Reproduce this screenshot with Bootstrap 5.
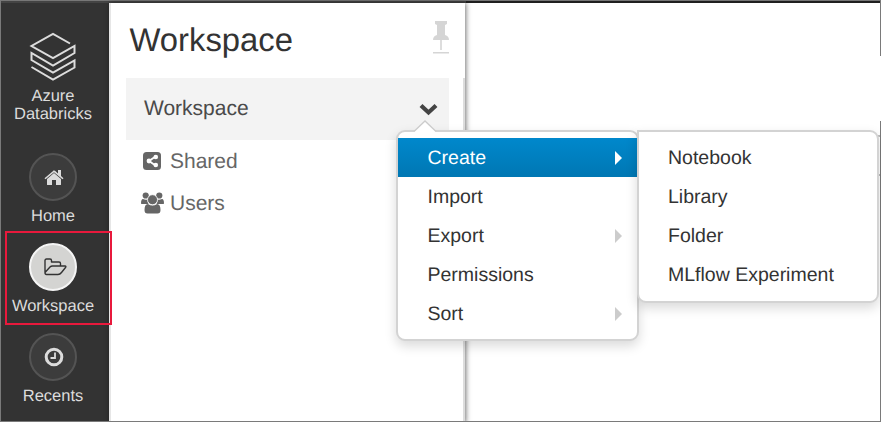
<!DOCTYPE html>
<html lang="en">
<head>
<meta charset="utf-8">
<title>Azure Databricks Workspace</title>
<link href="https://cdn.jsdelivr.net/npm/bootstrap@5.3.0/dist/css/bootstrap.min.css" rel="stylesheet">
<style>
body{font-family:"Liberation Sans",Arial,sans-serif;background:#fff;color:#333;text-rendering:geometricPrecision}
.app{width:881px;height:422px;border-left:1px solid #7a7a7a;border-bottom:1px solid #7a7a7a}
.topline{height:3px;border-top:1px solid #777;background:#1f1f1f}
.topline div{width:465px;height:2px;background:#444}
.sidebar{width:108px;padding-right:4px;background:#333;color:#dcdcdc;font-size:16.5px;line-height:18px}
.brand{padding-top:29px;height:150px}
.brand svg{margin-bottom:5px}
.side-item{height:90px;color:#dcdcdc;text-decoration:none}
.round{width:48px;height:48px;padding-left:2px;border:2px solid #545454;background:#3c3c3c;margin-bottom:6px}
.selected .round{padding-left:4px;background:#d4d4d2;border-color:#f5f5f5}
.highlight{left:4px;top:231px;width:107px;height:94px;border:2px solid #e8193c;z-index:3}
.panel{width:356px;border-left:2px solid #e6e6e6;box-shadow:1px 0 5px rgba(0,0,0,.55);background:#fff}
.panel-head{height:75px;padding:17px 15px 0 18.5px}
.panel-head h1{font-size:32.8px;line-height:40px;font-weight:400;color:#333}
.panel-head svg{margin-top:1px}
.tree{border-right:2px solid #ddd;padding-left:15px;padding-right:14px;font-size:21px;color:#666}
.tree-root{height:62px;background:#f3f3f3;color:#4a4a4a;padding:0 11px 1px 18px}
.tree-root svg{margin-top:1px}
.tree-item{height:42px;padding-left:15px}
.tree-item svg{margin-right:7px}
.tree-item .people{margin-right:6px}
.tree-item span{padding-top:2px}
.edge{right:0;width:1px;background:#7a7a7a;z-index:1}
.field{right:0;top:135px;width:30px;height:41px;border-top:2px solid #bbb;border-bottom:2px solid #bbb}
.menu{display:block;padding:6px 0 7px;border:2px solid #d3d3d3;border-radius:9px;box-shadow:0 5px 12px rgba(0,0,0,.15);background:#fff;font-size:19.5px;z-index:5}
.menu-main{width:243px;left:395px;top:130px;padding-bottom:6px}
.menu-sub{width:242px;left:636px;top:130px;border-top-left-radius:0}
.menu .dropdown-item{height:39px;line-height:39px;padding:1px 15px 0 29px;color:#333}
.menu-main .dropdown-item{padding-left:29.5px}
.menu .dropdown-item.active{background:linear-gradient(#08c,#0077b3);color:#fff}
.arrow{width:0;height:0;margin-top:-1px;border:7.5px solid transparent;border-left-color:#ccc;border-right:0}
.active .arrow{border-left-color:#fff}
.pointer{left:15px;top:-12px}
</style>
<script src="https://cdn.jsdelivr.net/npm/bootstrap@5.3.0/dist/js/bootstrap.bundle.min.js"></script>
</head>
<body class="overflow-hidden">
<div class="app d-flex flex-column position-relative overflow-hidden">
  <div class="topline flex-shrink-0"><div></div></div>
  <div class="d-flex flex-grow-1">
    <nav class="sidebar d-flex flex-column align-items-center text-center flex-shrink-0">
      <div class="brand flex-shrink-0">
        <svg class="d-block mx-auto" width="48" height="50" viewBox="0 0 48 50" fill="none" stroke="#dcdcdc" stroke-width="2"><path d="M41 11.500 24 2 2.500 14 24 26 45.500 14V21L24 33.500 2.500 21V28L24 40.500 45.500 28.500V35.500L24 47.500 2.500 35"/></svg>
        Azure<br>Databricks
      </div>
      <a class="side-item d-flex flex-column align-items-center flex-shrink-0">
        <span class="round rounded-circle d-flex align-items-center justify-content-center"><svg width="20" height="17" viewBox="0 0 20 17" fill="#dcdcdc"><path d="M10 4 3 10V15.500Q3 16 3.500 16H8V11H12V16H16.500Q17 16 17 15.500V10Z"/><path d="M10 1.200.5 9.200 1.500 10.300 10 3.200 18.500 10.300 19.500 9.200 17 7V1H14V4.500L11 1.800Q10 1 9 1.800Z"/></svg></span>Home
      </a>
      <a class="side-item selected d-flex flex-column align-items-center flex-shrink-0">
        <span class="round rounded-circle d-flex align-items-center justify-content-center"><svg width="24" height="18" viewBox="0 0 24 18" fill="none" stroke="#333" stroke-width="1.400" stroke-linejoin="round"><path d="M2 14.500V2.500Q2 1 3.500 1H7Q8.500 1 8.500 2.500V4H16Q17.500 4 17.500 5.500V8M2 14.500 7 9Q8 8 9.500 8H22Q23.500 8 22.500 9.500L18.500 14.500Q17 16.500 15 16.500H3.500Q2 16.500 2 14.500Z"/></svg></span>Workspace
      </a>
      <a class="side-item d-flex flex-column align-items-center flex-shrink-0">
        <span class="round rounded-circle d-flex align-items-center justify-content-center"><svg width="20" height="20" viewBox="0 0 20 20" fill="none" stroke="#dcdcdc"><circle cx="10" cy="10" r="7.800" stroke-width="3"/><path d="M11 5.500V11H6.500" stroke-width="1.800"/></svg></span>Recents
      </a>
    </nav>
    <main class="panel d-flex flex-column flex-shrink-0">
      <div class="panel-head d-flex justify-content-between">
        <h1 class="m-0">Workspace</h1>
        <svg width="18" height="35" viewBox="0 0 18 35" fill="#d5d5d5"><path d="M3 0H15V3L13 4V14Q17 15 17 19H1Q1 15 5 14V4L3 3Z"/><path d="M8.200 19H9.800V29H8.200ZM1 31H17V32.500H1Z"/></svg>
      </div>
      <div class="tree flex-grow-1">
        <div class="tree-root d-flex align-items-center justify-content-between">Workspace
          <svg width="19" height="13" viewBox="0 0 19 13" fill="none" stroke="#444" stroke-width="4.200"><path d="M2 2.500 9.500 9.500 17 2.500"/></svg>
        </div>
        <div class="tree-item d-flex align-items-center"><svg width="22" height="20" viewBox="0 0 22 20"><rect x="2" y="1" width="18" height="18" rx="3.500" fill="#666"/><path d="M14.500 5.500 8 10 14.500 14.500" fill="none" stroke="#fff" stroke-width="1.800"/><g fill="#fff"><circle cx="14.800" cy="6" r="2.300"/><circle cx="8" cy="10" r="2.400"/><circle cx="14.800" cy="14" r="2.300"/></g></svg><span>Shared</span></div>
        <div class="tree-item d-flex align-items-center"><svg class="people" width="23" height="22" viewBox="0 0 23 22" fill="#666"><circle cx="4.700" cy="3.500" r="3.100"/><circle cx="18.300" cy="3.500" r="3.100"/><path d="M0 11.500Q0 7 2 7Q5 8.500 7 7.200Q6 10 7.500 12H2Q0 12 0 11.500ZM23 11.500Q23 7 21 7Q18 8.500 16 7.200Q17 10 15.500 12H21Q23 12 23 11.500Z"/><path d="M3.500 18Q3.500 12 7 12Q11.500 15 16 12Q19.500 12 19.500 18Q19.500 21.500 16.500 21.500H6.500Q3.500 21.500 3.500 18Z"/><circle cx="11.500" cy="7.700" r="5" stroke="#fff" stroke-width=".8"/></svg><span>Users</span></div>
      </div>
    </main>
  </div>
  <div class="field position-absolute"></div>
  <div class="highlight position-absolute"></div>
  <div class="edge position-absolute top-0" style="height:56px"></div>
  <div class="edge position-absolute bottom-0" style="height:300px"></div>

  <div class="menu menu-main position-absolute">
    <svg class="pointer position-absolute" width="24" height="13" viewBox="0 0 24 13"><path d="M1 12 12 1 23 12V13H1Z" fill="#fff"/><path d="M1 11.500 12 1 23 11.500" fill="none" stroke="#ccc" stroke-width="1.300"/></svg>
    <a class="dropdown-item active d-flex align-items-center justify-content-between">Create<span class="arrow"></span></a>
    <a class="dropdown-item">Import</a>
    <a class="dropdown-item d-flex align-items-center justify-content-between">Export<span class="arrow"></span></a>
    <a class="dropdown-item">Permissions</a>
    <a class="dropdown-item d-flex align-items-center justify-content-between">Sort<span class="arrow"></span></a>
  </div>
  <div class="menu menu-sub position-absolute">
    <a class="dropdown-item">Notebook</a>
    <a class="dropdown-item">Library</a>
    <a class="dropdown-item">Folder</a>
    <a class="dropdown-item">MLflow Experiment</a>
  </div>
</div>
</body>
</html>
